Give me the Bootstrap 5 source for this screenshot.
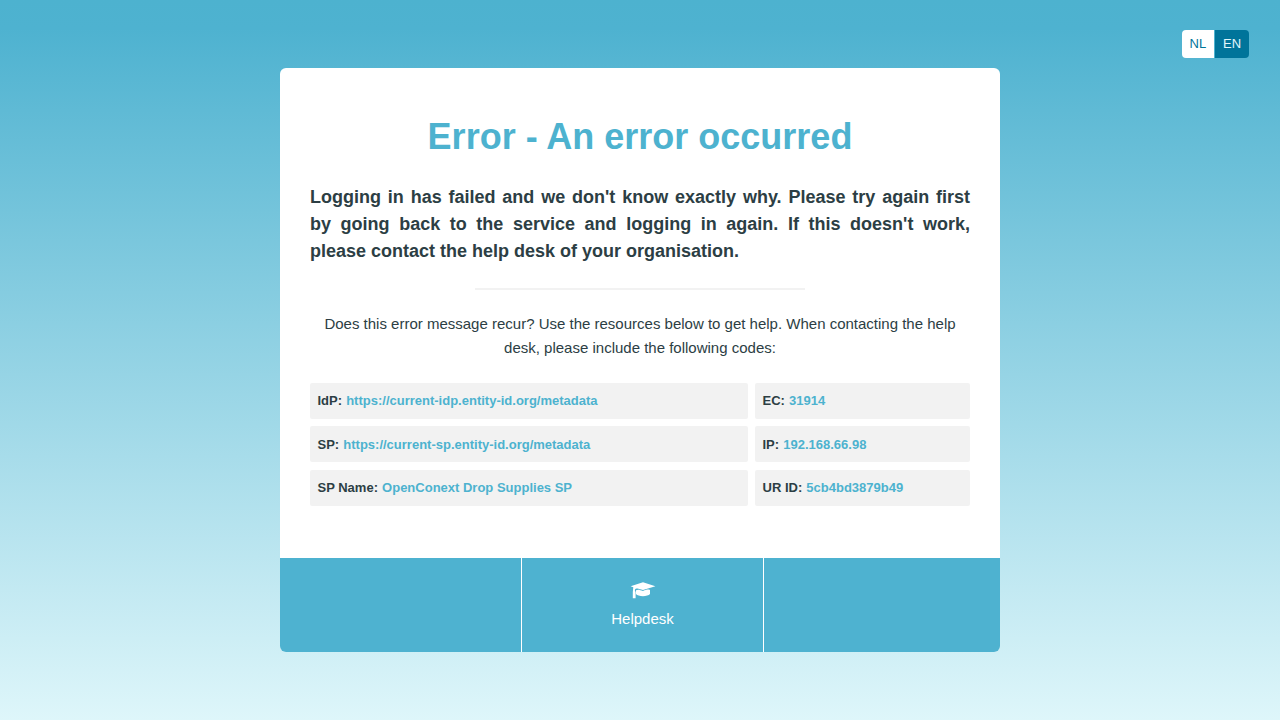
<!DOCTYPE html>
<html lang="en"><head><meta charset="utf-8"><title>Error - An error occurred</title>
<link href="https://cdn.jsdelivr.net/npm/bootstrap@5.3.0/dist/css/bootstrap.min.css" rel="stylesheet">
<style>
body{font-family:"Liberation Sans",Arial,sans-serif;font-size:15px;line-height:24px;color:#2c3e44;height:720px;overflow:hidden;background:linear-gradient(#4db2cf 0,#4eb2d0 4%,#def6fa 100%)}
.languages{top:30px;right:31px;font-size:13px;line-height:28px;height:28px;border-radius:4px}
.languages a{padding:0 8px;background:#fff;color:#00749a;text-decoration:none}
.languages a:first-child{width:32px;padding:0 7.5px}
.languages .chosen{background:#00749a;color:#e2f6fb;border-left:1px solid #4db2cf;width:35px}
.error-panel{width:720px;height:584.3px;margin-top:68.2px;border-radius:6px}
.message-area{height:490px;padding:0 30px}
h1{font-size:36px;line-height:44px;font-weight:700;color:#4db2cf;margin:47px 0 25px}
.reason{font-size:18px;line-height:27px;text-align:justify;margin:0}
.divider{width:330px;height:2px;background:#f2f2f2;margin:23px auto 22px}
.codes{display:grid;grid-template-columns:438px 215px;gap:7.25px 7px;margin-top:23px;font-size:13px}
.codes div{height:36px;line-height:36px;padding:0 7.5px;background:#f2f2f2;border-radius:2px;font-weight:700}
.codes div:nth-child(3),.codes div:nth-child(4){line-height:37px}
.codes span{color:#4db2cf;margin-left:.5px}
.help-bar{height:94.3px;background:#4eb2d0;color:#fff}
.help-bar>div{width:242px;border-right:1px solid #fff}
.help-bar>div:last-child{width:236px;border:0}
.cap-icon{margin:24px 0 6.6px}
</style>
<script src="https://cdn.jsdelivr.net/npm/bootstrap@5.3.0/dist/js/bootstrap.bundle.min.js"></script></head>
<body>
<nav class="languages position-absolute d-flex overflow-hidden"><a href="#">NL</a><a class="chosen" href="#">EN</a></nav>
<main class="error-panel mx-auto bg-white overflow-hidden">
<section class="message-area d-flex flex-column">
<h1 class="text-center">Error - An error occurred</h1>
<p class="reason fw-bold">Logging in has failed and we don't know exactly why. Please try again first by going back to the service and logging in again. If this doesn't work, please contact the help desk of your organisation.</p>
<div class="divider"></div>
<p class="text-center mb-0">Does this error message recur? Use the resources below to get help. When contacting the help desk, please include the following codes:</p>
<div class="codes"><div>IdP: <span>https://current-idp.entity-id.org/metadata</span></div><div>EC: <span>31914</span></div><div>SP: <span>https://current-sp.entity-id.org/metadata</span></div><div>IP: <span>192.168.66.98</span></div><div>SP Name: <span>OpenConext Drop Supplies SP</span></div><div>UR ID: <span>5cb4bd3879b49</span></div></div>
</section>
<footer class="help-bar d-flex"><div></div><div class="d-flex flex-column align-items-center"><svg class="cap-icon d-block" width="26" height="18" viewBox="0 0 26 18" fill="#fff"><path d="M.6 4.2 13 .2l12.4 4L13 7.9 7.5 6.6C5.5 6.2 5 7 4.9 8.8L5.6 10v6.2H2.8V10l.5-4.7z"/><path d="M6 8.3C8 7 10 7.8 13 9c3-1.2 5-2 7-.9v4c-2.2 2.7-12 2.7-14 0z"/></svg><span>Helpdesk</span></div><div></div></footer>
</main></body></html>
